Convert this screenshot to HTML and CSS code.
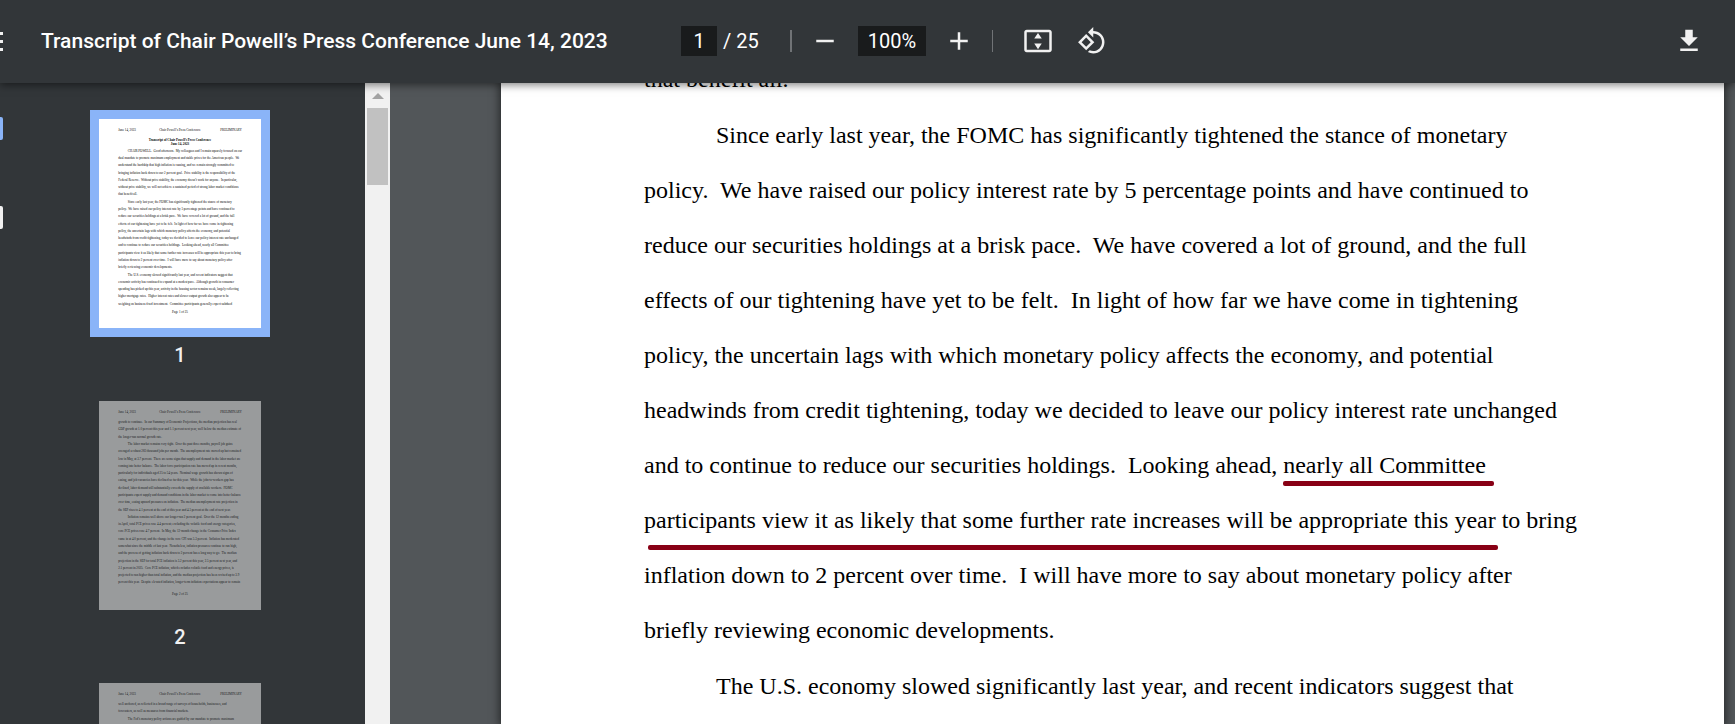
FILE: index.html
```html
<!DOCTYPE html>
<html lang="en">
<head>
  <meta charset="UTF-8">
  <meta name="viewport" content="width=device-width, initial-scale=1.0">
  <title>Transcript of Chair Powell’s Press Conference June 14, 2023</title>
  <link rel="stylesheet" href="styles.css">
</head>
<body>
  <!-- Toolbar -->
  <header class="toolbar">
    <div class="toolbar-start">
      <button class="menu-button" type="button" aria-label="Menu"><span></span><span></span><span></span></button>
      <h1 class="title">Transcript of Chair Powell’s Press Conference June 14, 2023</h1>
    </div>
    <div class="toolbar-center">
      <input class="field page-field" type="text" value="1" aria-label="Page number">
      <span class="page-count">/ 25</span>
      <span class="divider"></span>
      <button class="icon-button" type="button" aria-label="Zoom out">
        <svg viewBox="0 0 24 24"><path d="M5 11h14v2H5z"/></svg>
      </button>
      <input class="field zoom-field" type="text" value="100%" aria-label="Zoom level">
      <button class="icon-button" type="button" aria-label="Zoom in">
        <svg viewBox="0 0 24 24"><path d="M19 13h-6v6h-2v-6H5v-2h6V5h2v6h6z"/></svg>
      </button>
      <span class="divider thin"></span>
      <button class="icon-button" type="button" aria-label="Fit to page">
        <svg viewBox="0 0 24 24"><path fill-rule="evenodd" d="M3 3h18c1.100 0 2 .9 2 2v14c0 1.100-.9 2-2 2H3c-1.100 0-2-.9-2-2V5c0-1.100.9-2 2-2zm0 2v14h18V5z"/><path d="M12 5.500l3 4.500H9zM12 18.500l-3-4.500h6z"/></svg>
      </button>
      <button class="icon-button rotate" type="button" aria-label="Rotate counterclockwise">
        <svg viewBox="0 0 24 24"><path d="M7.340 6.410L.86 12.900l6.490 6.480 6.490-6.480-6.500-6.490zM3.690 12.900l3.660-3.660L11 12.900l-3.660 3.660-3.650-3.660zm15.670-6.260C17.610 4.880 15.300 4 13 4V.76L8.760 5 13 9.240V6c1.790 0 3.580.68 4.950 2.050 2.730 2.730 2.730 7.170 0 9.900C16.580 19.320 14.790 20 13 20c-.97 0-1.940-.21-2.840-.61l-1.490 1.490C10.020 21.620 11.510 22 13 22c2.300 0 4.610-.88 6.360-2.640 3.520-3.510 3.520-9.210 0-12.720z"/></svg>
      </button>
    </div>
    <div class="toolbar-end">
      <button class="icon-button" type="button" aria-label="Download">
        <svg viewBox="0 0 24 24"><path d="M19 9h-4V3H9v6H5l7 7 7-7zM5 18v2h14v-2H5z"/></svg>
      </button>
    </div>
  </header>

  <main class="content">
    <!-- Sidebar with page thumbnails -->
    <aside class="sidebar">
      <div class="rail">
        <button class="rail-button active" type="button" aria-label="Thumbnails"></button>
        <button class="rail-button" type="button" aria-label="Document outline"></button>
      </div>
      <div class="thumbnails" id="thumbnails"></div>
      <div class="scrollbar">
        <svg class="scroll-arrow" viewBox="0 0 12 6"><path d="M6 0l6 6H0z"/></svg>
        <div class="scroll-thumb"></div>
      </div>
    </aside>

    <!-- Current page -->
    <section class="viewer">
      <article class="page">
        <p class="continued">that benefit all.</p>
        <p>Since early last year, the FOMC has significantly tightened the stance of monetary<br>
        policy.&nbsp; We have raised our policy interest rate by 5 percentage points and have continued to<br>
        reduce our securities holdings at a brisk pace.&nbsp; We have covered a lot of ground, and the full<br>
        effects of our tightening have yet to be felt.&nbsp; In light of how far we have come in tightening<br>
        policy, the uncertain lags with which monetary policy affects the economy, and potential<br>
        headwinds from credit tightening, today we decided to leave our policy interest rate unchanged<br>
        and to continue to reduce our securities holdings.&nbsp; Looking ahead, <span class="mark mark-short">nearly all Committee</span><br>
        <span class="mark mark-long">participants view it as likely that some further rate increases will be appropriate this year</span> to bring<br>
        inflation down to 2 percent over time.&nbsp; I will have more to say about monetary policy after<br>
        briefly reviewing economic developments.</p>
        <p>The U.S. economy slowed significantly last year, and recent indicators suggest that</p>
      </article>
    </section>
  </main>

  <script src="thumbnails.js"></script>
</body>
</html>
```

FILE: styles.css
```css
* {
  box-sizing: border-box;
}

body {
  margin: 0;
  height: 100vh;
  display: flex;
  flex-direction: column;
  overflow: hidden;
  font-family: Roboto, Arial, sans-serif;
  background: #525659;
  color: #fff;
}

button {
  padding: 0;
  border: 0;
  background: none;
}

/* Toolbar */
.toolbar {
  position: relative;
  z-index: 1;
  flex: none;
  height: 83px;
  padding-bottom: 1px;
  display: grid;
  grid-template-columns: 1fr auto 1fr;
  align-items: center;
  background: #323639;
  box-shadow: 0 2px 8px rgba(0, 0, 0, 0.5);
}

.toolbar-start,
.toolbar-center,
.toolbar-end {
  display: flex;
  align-items: center;
}

.toolbar-start {
  min-width: 0;
}

.toolbar-center {
  padding-left: 62px;
}

.toolbar-end {
  justify-content: flex-end;
  padding-right: 22px;
}

.menu-button {
  width: 3px;
  margin-right: 38px;
  display: flex;
  flex-direction: column;
  gap: 5px;
}

.menu-button span {
  width: 100%;
  height: 3px;
  background: #f1f1f1;
}

.title {
  margin: 0;
  font-size: 21px;
  font-weight: 500;
  white-space: nowrap;
}

.field {
  height: 30px;
  padding: 0;
  border: 0;
  background: #191b1c;
  color: #fff;
  font-family: inherit;
  font-size: 20px;
  text-align: center;
}

.page-field {
  width: 36px;
}

.zoom-field {
  width: 68px;
  margin: 0 9px;
}

.page-count {
  width: 67px;
  margin-left: 6px;
  font-size: 20px;
  white-space: nowrap;
}

.divider {
  width: 2px;
  height: 22px;
  margin-right: 9px;
  background: #707376;
}

.divider.thin {
  width: 1px;
  margin: 0 21px 0 9px;
}

.icon-button {
  width: 48px;
  height: 48px;
  display: flex;
  align-items: center;
  justify-content: center;
}

.icon-button svg {
  width: 30px;
  height: 30px;
  fill: #f1f1f1;
}

.rotate {
  margin-left: 6px;
}

/* Sidebar */
.content {
  flex: 1;
  min-height: 0;
  display: flex;
}

.sidebar {
  flex: none;
  width: 390px;
  display: flex;
  background: #323639;
}

.rail {
  width: 3px;
  padding-top: 34px;
  display: flex;
  flex-direction: column;
  gap: 66px;
}

.rail-button {
  width: 3px;
  height: 23px;
  background: #f1f1f1;
  border-radius: 0 2px 2px 0;
}

.rail-button.active {
  background: #8ab4f8;
}

.thumbnails {
  flex: 1;
  padding: 27px 8px 0 0;
  overflow: hidden;
}

.thumbnail {
  display: flex;
  flex-direction: column;
  align-items: center;
}

.sheet {
  padding: 9px;
}

.sheet svg {
  display: block;
  width: 162px;
  height: 209px;
  background: #fff;
  font-family: "Liberation Serif", "Times New Roman", serif;
  font-size: 12px;
  opacity: 0.5;
}

.thumbnail.selected .sheet {
  background: #8ab4f8;
}

.thumbnail.selected svg {
  opacity: 1;
}

.sheet .heading {
  font-weight: bold;
}

.thumbnail-label {
  height: 55px;
  padding-top: 6px;
  font-size: 20px;
  font-weight: 500;
  line-height: 24px;
  color: #f1f1f1;
}

.scrollbar {
  width: 25px;
  padding: 10px 2px 0;
  display: flex;
  flex-direction: column;
  align-items: center;
  gap: 9px;
  background: #f1f1f1;
}

.scroll-arrow {
  width: 12px;
  height: 6px;
  fill: #a3a3a3;
}

.scroll-thumb {
  width: 100%;
  height: 77px;
  background: #c1c1c1;
}

/* Document page */
.viewer {
  flex: 1;
  min-width: 0;
  padding: 0 11px 0 111px;
  overflow: hidden;
}

.page {
  height: 100%;
  padding-left: 143px;
  background: #fff;
  box-shadow: 0 0 8px 2px rgba(0, 0, 0, 0.5);
  color: #000;
  font-family: "Liberation Serif", "Times New Roman", serif;
  font-size: 24px;
  line-height: 55px;
  white-space: nowrap;
  overflow: hidden;
}

.page p {
  margin: 0 0 1px;
  text-indent: 72px;
}

/* the page is scrolled to the middle of this line */
.page .continued {
  margin-top: -31px;
  text-indent: 0;
}

.mark {
  position: relative;
  text-indent: 0;
}

/* Pen lines drawn under the text */
.mark::after {
  content: "";
  position: absolute;
  height: 5px;
  border-radius: 2px;
  background: #880015;
}

.mark-short::after {
  left: 0;
  right: -8px;
  top: 29px;
}

.mark-long::after {
  left: 4px;
  right: -2px;
  top: 38px;
}
```

FILE: thumbnails.js
```js
// Text of each page, line by line. A leading tab starts a new paragraph.
const pages = [
  {
    heading: ['Transcript of Chair Powell’s Press Conference', 'June 14, 2023'],
    top: 124,
    lines: [
      '\tCHAIR POWELL.  Good afternoon.  My colleagues and I remain squarely focused on our',
      'dual mandate to promote maximum employment and stable prices for the American people.  We',
      'understand the hardship that high inflation is causing, and we remain strongly committed to',
      'bringing inflation back down to our 2 percent goal.  Price stability is the responsibility of the',
      'Federal Reserve.  Without price stability, the economy doesn’t work for anyone.  In particular,',
      'without price stability, we will not achieve a sustained period of strong labor market conditions',
      'that benefit all.',
      '\tSince early last year, the FOMC has significantly tightened the stance of monetary',
      'policy.  We have raised our policy interest rate by 5 percentage points and have continued to',
      'reduce our securities holdings at a brisk pace.  We have covered a lot of ground, and the full',
      'effects of our tightening have yet to be felt.  In light of how far we have come in tightening',
      'policy, the uncertain lags with which monetary policy affects the economy, and potential',
      'headwinds from credit tightening, today we decided to leave our policy interest rate unchanged',
      'and to continue to reduce our securities holdings.  Looking ahead, nearly all Committee',
      'participants view it as likely that some further rate increases will be appropriate this year to bring',
      'inflation down to 2 percent over time.  I will have more to say about monetary policy after',
      'briefly reviewing economic developments.',
      '\tThe U.S. economy slowed significantly last year, and recent indicators suggest that',
      'economic activity has continued to expand at a modest pace.  Although growth in consumer',
      'spending has picked up this year, activity in the housing sector remains weak, largely reflecting',
      'higher mortgage rates.  Higher interest rates and slower output growth also appear to be',
      'weighing on business fixed investment.  Committee participants generally expect subdued'
    ]
  },
  {
    heading: [],
    top: 84,
    lines: [
      'growth to continue.  In our Summary of Economic Projections, the median projection has real',
      'GDP growth at 1.0 percent this year and 1.1 percent next year, well below the median estimate of',
      'the longer-run normal growth rate.',
      '\tThe labor market remains very tight.  Over the past three months, payroll job gains',
      'averaged a robust 283 thousand jobs per month.  The unemployment rate moved up but remained',
      'low in May, at 3.7 percent.  There are some signs that supply and demand in the labor market are',
      'coming into better balance.  The labor force participation rate has moved up in recent months,',
      'particularly for individuals aged 25 to 54 years.  Nominal wage growth has shown signs of',
      'easing, and job vacancies have declined so far this year.  While the jobs-to-workers gap has',
      'declined, labor demand still substantially exceeds the supply of available workers.  FOMC',
      'participants expect supply and demand conditions in the labor market to come into better balance',
      'over time, easing upward pressures on inflation.  The median unemployment rate projection in',
      'the SEP rises to 4.1 percent at the end of this year and 4.5 percent at the end of next year.',
      '\tInflation remains well above our longer-run 2 percent goal.  Over the 12 months ending',
      'in April, total PCE prices rose 4.4 percent; excluding the volatile food and energy categories,',
      'core PCE prices rose 4.7 percent.  In May, the 12-month change in the Consumer Price Index',
      'came in at 4.0 percent, and the change in the core CPI was 5.3 percent.  Inflation has moderated',
      'somewhat since the middle of last year.  Nonetheless, inflation pressures continue to run high,',
      'and the process of getting inflation back down to 2 percent has a long way to go.  The median',
      'projection in the SEP for total PCE inflation is 3.2 percent this year, 2.5 percent next year, and',
      '2.1 percent in 2025.  Core PCE inflation, which excludes volatile food and energy prices, is',
      'projected to run higher than total inflation, and the median projection has been revised up to 3.9',
      'percent this year.  Despite elevated inflation, longer-term inflation expectations appear to remain'
    ]
  },
  {
    heading: [],
    top: 84,
    lines: [
      'well anchored, as reflected in a broad range of surveys of households, businesses, and',
      'forecasters, as well as measures from financial markets.',
      '\tThe Fed’s monetary policy actions are guided by our mandate to promote maximum'
    ]
  }
];

const lineStep = 27.6;

// Letter-size sheet in points
function drawSheet(page, number) {
  let out = '<text x="72" y="44">June 14, 2023</text>';
  out += '<text x="306" y="44" text-anchor="middle">Chair Powell’s Press Conference</text>';
  out += '<text x="540" y="44" text-anchor="end">PRELIMINARY</text>';
  page.heading.forEach((line, i) => {
    out += `<text class="heading" x="306" y="${83 + i * 14}" text-anchor="middle">${line}</text>`;
  });
  page.lines.forEach((line, i) => {
    const x = line.startsWith('\t') ? 108 : 72;
    const text = line.trim().replace(/ {2}/g, '\u00a0 ');
    out += `<text x="${x}" y="${page.top + i * lineStep}">${text}</text>`;
  });
  out += `<text x="306" y="737" text-anchor="middle">Page ${number} of 25</text>`;
  return `<svg viewBox="0 0 612 792">${out}</svg>`;
}

const list = document.getElementById('thumbnails');
pages.forEach((page, i) => {
  const item = document.createElement('div');
  item.className = i === 0 ? 'thumbnail selected' : 'thumbnail';
  item.innerHTML = `<div class="sheet">${drawSheet(page, i + 1)}</div><div class="thumbnail-label">${i + 1}</div>`;
  list.appendChild(item);
});
```
